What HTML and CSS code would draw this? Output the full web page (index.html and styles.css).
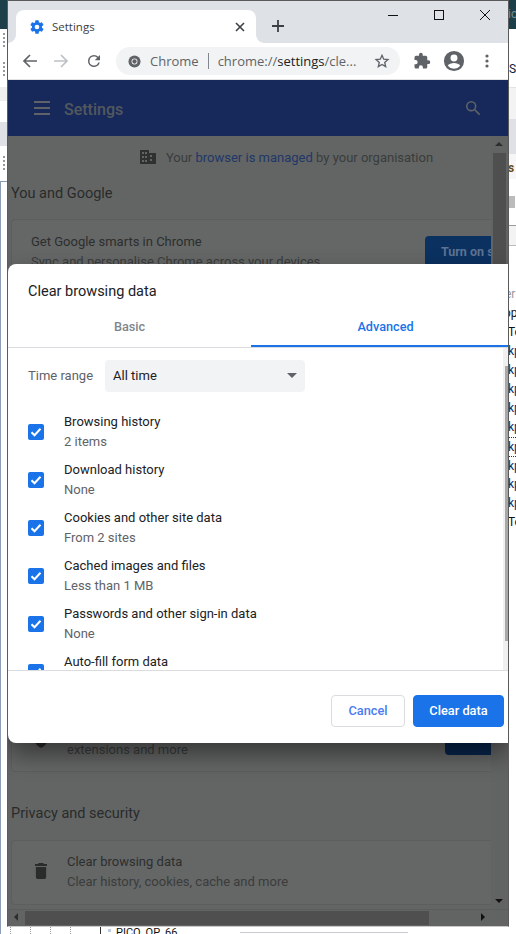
FILE: index.html
```html
<!DOCTYPE html>
<html lang="en">
<head>
	<meta charset="UTF-8">
	<title>Settings</title>
	<link rel="stylesheet" href="styles.css">
</head>
<body>
	<div class="desk">
		<div class="strip-left">
			<div class="sl-teal"></div>
			<div class="sl-white"><span class="grip"></span><span class="grip"></span></div>
			<div class="sl-grey"></div>
			<div class="sl-orange"><span class="orange-mark"></span></div>
			<div class="sl-mid"></div>
			<div class="sl-white2"><span class="grip"></span></div>
			<div class="sl-blue"></div>
		</div>
		<div class="strip-right">
			<div class="sr-teal">ic</div>
			<div class="sr-white">S</div>
			<div class="sr-band1"></div>
			<div class="sr-band2"></div>
			<div class="sr-band3">s</div>
			<div class="sr-band4"><span class="sr-blob"></span></div>
			<div class="sr-band5"></div>
			<div class="sr-gap"></div>
			<div class="sr-list">
				<span class="sr-faint">er</span>
				<span class="sr-cut">pp</span><span>Te</span><span class="sr-link">kp</span><span class="sr-link">kp</span><span class="sr-link">kp</span><span class="sr-link">kp</span><span class="sr-link">kp</span><span class="sr-link sr-dot">kp</span><span class="sr-link sr-dot">kp</span><span class="sr-link">kp</span><span class="sr-link">kp</span><span>Te</span>
			</div>
		</div>
		<div class="strip-bottom">
			<span class="tree"></span><span class="tree"></span><span class="tree"></span><span class="tree"></span>
			<span class="file-ico"></span><span class="file-name">PICO_OP_66</span>
			<span class="bottom-rule"></span>
		</div>

		<div class="window">
			<div class="tabstrip">
				<div class="tab">
					<svg class="tab-ico" width="16" height="16" viewBox="0 0 24 24"><path fill="#1a73e8" d="M19.4 13c.04-.32.1-.66.1-1s-.03-.68-.1-1l2.1-1.65c.2-.15.25-.42.13-.64l-2-3.46c-.12-.22-.39-.3-.61-.22l-2.49 1c-.52-.4-1.08-.73-1.69-.98l-.38-2.65A.49.49 0 0 0 14 2h-4c-.25 0-.46.18-.49.42l-.38 2.65c-.61.25-1.17.59-1.69.98l-2.49-1c-.23-.09-.49 0-.61.22l-2 3.46c-.13.22-.07.49.12.64L4.57 11c-.04.32-.07.66-.07 1s.03.68.07 1l-2.11 1.65c-.19.15-.24.42-.12.64l2 3.46c.12.22.39.3.61.22l2.49-1c.52.4 1.08.73 1.69.98l.38 2.65c.03.24.24.42.49.42h4c.25 0 .46-.18.49-.42l.38-2.65c.61-.25 1.17-.59 1.69-.98l2.49 1c.23.09.49 0 .61-.22l2-3.46c.12-.22.07-.49-.12-.64L19.4 13zM12 15.5a3.5 3.5 0 1 1 0-7 3.5 3.5 0 0 1 0 7z"/></svg>
					<span class="tab-title">Settings</span>
					<svg class="tab-close" width="10" height="10" viewBox="0 0 10 10"><path d="M1 1l8 8M9 1l-8 8" stroke="#3c4043" stroke-width="1.6" fill="none"/></svg>
				</div>
				<svg class="newtab" width="14" height="14" viewBox="0 0 14 14"><path d="M7 1v12M1 7h12" stroke="#3c4043" stroke-width="1.8" fill="none"/></svg>
				<div class="winbtns">
					<svg width="12" height="12" viewBox="0 0 12 12"><path d="M1 6.5h10" stroke="#111" fill="none"/></svg>
					<svg width="12" height="12" viewBox="0 0 12 12"><rect x="1.5" y="1.5" width="9" height="9" stroke="#111" fill="none"/></svg>
					<svg width="12" height="12" viewBox="0 0 12 12"><path d="M1 1l10 10M11 1L1 11" stroke="#111" fill="none"/></svg>
				</div>
			</div>
			<div class="toolbar">
				<svg class="nav" width="16" height="16" viewBox="0 0 16 16"><path d="M15 8H2M8 2L2 8l6 6" stroke="#5f6368" stroke-width="1.7" fill="none"/></svg>
				<svg class="nav" width="16" height="16" viewBox="0 0 16 16"><path d="M1 8h13M8 2l6 6-6 6" stroke="#bdc1c6" stroke-width="1.7" fill="none"/></svg>
				<svg class="nav" width="18" height="18" viewBox="0 0 24 24"><path fill="#5f6368" d="M17.65 6.35A7.96 7.96 0 0 0 12 4a8 8 0 1 0 7.73 10h-2.08A6 6 0 1 1 12 6c1.66 0 3.14.69 4.22 1.78L13 11h7V4l-2.35 2.35z"/></svg>
				<div class="omnibox">
					<svg class="chrome-ico" width="13" height="13" viewBox="0 0 14 14"><circle cx="7" cy="7" r="6.5" fill="#5f6368"/><circle cx="7" cy="7" r="3.2" fill="#f1f3f4"/><circle cx="7" cy="7" r="2.3" fill="#5f6368"/></svg>
					<span class="omni-host">Chrome</span>
					<span class="omni-sep"></span>
					<span class="omni-url"><span class="omni-dim">chrome://</span>settings<span class="omni-dim">/cle...</span></span>
					<svg class="omni-star" width="16" height="16" viewBox="0 0 24 24"><path fill="none" stroke="#5f6368" stroke-width="2" d="M12 3.5l2.6 5.8 6.3.6-4.8 4.2 1.4 6.2-5.500-3.200-5.500 3.200 1.400-6.200-4.800-4.200 6.300-.6z"/></svg>
				</div>
				<svg class="tool-ico" width="18" height="18" viewBox="0 0 24 24"><path fill="#5f6368" d="M20.500 11H19V7a2 2 0 0 0-2-2h-4V3.500a2.500 2.500 0 0 0-5 0V5H4a2 2 0 0 0-2 2v3.800h1.500a2.700 2.700 0 0 1 0 5.400H2V20a2 2 0 0 0 2 2h3.800v-1.500a2.700 2.700 0 0 1 5.400 0V22H17a2 2 0 0 0 2-2v-4h1.500a2.500 2.500 0 0 0 0-5z"/></svg>
				<svg class="tool-ico" width="22" height="22" viewBox="0 0 24 24"><path fill="#5f6368" d="M12 1a11 11 0 1 0 0 22 11 11 0 0 0 0-22zm0 4a3.800 3.800 0 1 1 0 7.600A3.800 3.800 0 0 1 12 5zm0 15.500a8.700 8.700 0 0 1-6.800-3.300c.8-1.900 4.300-2.900 6.800-2.900s6 1 6.800 2.900a8.700 8.700 0 0 1-6.800 3.300z"/></svg>
				<svg class="tool-ico" width="4" height="14" viewBox="0 0 4 14"><circle cx="2" cy="2" r="1.600" fill="#5f6368"/><circle cx="2" cy="7" r="1.600" fill="#5f6368"/><circle cx="2" cy="12" r="1.600" fill="#5f6368"/></svg>
			</div>

			<div class="settings-bar">
				<span class="burger"><i></i><i></i><i></i></span>
				<span class="bar-title">Settings</span>
				<svg class="bar-search" width="16" height="16" viewBox="0 0 18 18"><circle cx="7" cy="7" r="5" stroke="#5f6368" stroke-width="1.800" fill="none"/><path d="M11 11l5.500 5.500" stroke="#5f6368" stroke-width="1.800"/></svg>
			</div>

			<div class="viewport">
				<div class="page-row">
					<div class="page">
						<div class="managed">
							<svg width="18" height="16" viewBox="0 0 18 16"><path fill="#2f3131" d="M1 1h9v3h7v11H1zm2 2v2h2V3zm3 0v2h2V3zM3 7v2h2V7zm3 0v2h2V7zm-3 4v2h2v-2zm3 0v2h2v-2zm5-5v2h2V6zm0 4v2h2v-2z"/></svg>
							<span>Your <a class="managed-link">browser is managed</a> by your organisation</span>
						</div>
						<h2 class="section-title first">You and Google</h2>
						<div class="card card-google">
							<div class="card-top">
								<div>
									<div class="row-title">Get Google smarts in Chrome</div>
									<div class="row-sub">Sync and personalise Chrome across your devices</div>
								</div>
								<div class="turn-on">Turn on sync</div>
							</div>
							<div class="card-bottom">
								<svg class="shield" width="14" height="18" viewBox="0 0 16 20"><path fill="#2a2b2b" d="M8 0l8 3v6c0 5-3.500 9-8 11-4.500-2-8-6-8-11V3z"/></svg>
								<div class="row-sub ext">extensions and more</div>
								<div class="turn-on small">Check</div>
							</div>
						</div>
						<h2 class="section-title">Privacy and security</h2>
						<div class="card card-privacy">
							<svg class="trash" width="12" height="16" viewBox="0 0 14 16" preserveAspectRatio="none"><path fill="#2a2b2b" d="M4.500 0h5l1 1H14v2H0V1h3.500zM1 4h12v10a2 2 0 0 1-2 2H3a2 2 0 0 1-2-2z"/></svg>
							<div>
								<div class="row-title">Clear browsing data</div>
								<div class="row-sub">Clear history, cookies, cache and more</div>
							</div>
						</div>
					</div>
					<div class="vscroll">
						<span class="arrow-up"></span>
						<span class="vthumb"></span>
						<span class="arrow-down"></span>
					</div>
				</div>
				<div class="hscroll">
					<span class="arrow-left"></span>
					<span class="hthumb"></span>
					<span class="arrow-right"></span>
				</div>
			</div>

			<div class="dialog">
				<div class="dlg-title">Clear browsing data</div>
				<div class="dlg-tabs">
					<div class="dlg-tab">Basic</div>
					<div class="dlg-tab active">Advanced</div>
				</div>
				<div class="dlg-body">
					<div class="dlg-scroll">
						<div class="time-range">
							<span class="time-label">Time range</span>
							<div class="select">All time<span class="select-arrow"></span></div>
						</div>
						<div class="check-row"><span class="check"><svg width="16" height="16" viewBox="0 0 16 16"><path d="M3.500 8.200l3 3 6-6.400" stroke="#fff" stroke-width="2" fill="none"/></svg></span><div><div class="check-title">Browsing history</div><div class="check-sub">2 items</div></div></div>
						<div class="check-row"><span class="check"><svg width="16" height="16" viewBox="0 0 16 16"><path d="M3.500 8.200l3 3 6-6.400" stroke="#fff" stroke-width="2" fill="none"/></svg></span><div><div class="check-title">Download history</div><div class="check-sub">None</div></div></div>
						<div class="check-row"><span class="check"><svg width="16" height="16" viewBox="0 0 16 16"><path d="M3.500 8.200l3 3 6-6.400" stroke="#fff" stroke-width="2" fill="none"/></svg></span><div><div class="check-title">Cookies and other site data</div><div class="check-sub">From 2 sites</div></div></div>
						<div class="check-row"><span class="check"><svg width="16" height="16" viewBox="0 0 16 16"><path d="M3.500 8.200l3 3 6-6.400" stroke="#fff" stroke-width="2" fill="none"/></svg></span><div><div class="check-title">Cached images and files</div><div class="check-sub">Less than 1 MB</div></div></div>
						<div class="check-row"><span class="check"><svg width="16" height="16" viewBox="0 0 16 16"><path d="M3.500 8.200l3 3 6-6.400" stroke="#fff" stroke-width="2" fill="none"/></svg></span><div><div class="check-title">Passwords and other sign-in data</div><div class="check-sub">None</div></div></div>
						<div class="check-row"><span class="check"><svg width="16" height="16" viewBox="0 0 16 16"><path d="M3.500 8.200l3 3 6-6.400" stroke="#fff" stroke-width="2" fill="none"/></svg></span><div><div class="check-title">Auto-fill form data</div><div class="check-sub">None</div></div></div>
					</div>
					<div class="dlg-scrollbar"><span class="dlg-thumb"></span></div>
				</div>
				<div class="dlg-foot">
					<div class="btn btn-cancel">Cancel</div>
					<div class="btn btn-clear">Clear data</div>
				</div>
			</div>
		</div>
	</div>
</body>
</html>
```

FILE: styles.css
```css
html, body {
	margin: 0;
	padding: 0;
}
body {
	width: 516px;
	height: 934px;
	overflow: hidden;
	background: #fff;
	font-family: Roboto, "Liberation Sans", sans-serif;
}
.desk {
	position: relative;
	width: 516px;
	height: 934px;
	overflow: hidden;
}

/* bits of other windows behind chrome */
.strip-left {
	position: absolute;
	left: 0;
	top: 0;
	width: 8px;
	height: 934px;
	display: flex;
	flex-direction: column;
	background: #fff;
}
.sl-teal { height: 29px; background: #1d3f4a; }
.sl-white { height: 58px; display: flex; flex-direction: column; gap: 14px; padding: 4px 0 0 3px; box-sizing: border-box; }
.sl-grey { height: 14px; background: #efefef; }
.sl-orange { height: 21px; display: flex; justify-content: flex-end; }
.orange-mark { width: 1px; height: 8px; background: #f0a830; }
.sl-mid { height: 24px; background: #dfe1e6; }
.sl-white2 { height: 35px; padding: 10px 0 0 3px; box-sizing: border-box; }
.sl-blue { flex: 1; border-top: 1px solid #8c9db5; border-left: 1px solid #8c9db5; }
.grip {
	display: block;
	width: 2px;
	height: 15px;
	background: repeating-linear-gradient(#999 0 2px, transparent 2px 4px);
}
.strip-right {
	position: absolute;
	left: 508px;
	top: 0;
	width: 8px;
	height: 934px;
	overflow: hidden;
	font-size: 12px;
	color: #111;
	background: #fff;
}
.sr-teal { height: 29px; background: #1d3f4a; color: #6f8f99; line-height: 29px; }
.sr-white { height: 58px; line-height: 80px; padding-left: 1px; box-sizing: border-box; color: #0b1a3a; }
.sr-band1 { height: 32px; background: #f3f3f3; border-top: 1px solid #e4e4e4; box-sizing: border-box; }
.sr-band2 { height: 35px; background: #dfe1e6; }
.sr-band3 { height: 25px; background: #f6f6f6; line-height: 28px; color: #6b4a10; font-weight: 700; }
.sr-band4 { height: 46px; display: flex; align-items: center; }
.sr-blob { width: 7px; height: 12px; background: #bbb; }
.sr-band5 { height: 21px; background: #f3f3f3; border-top: 1px solid #9a9a9a; border-bottom: 1px solid #bbb; box-sizing: border-box; }
.sr-gap { height: 39px; }
.sr-list { display: flex; flex-direction: column; line-height: 19px; white-space: nowrap; }
.sr-list span { height: 19px; }
.sr-faint { color: #999; margin-left: -3px; }
.sr-cut { margin-left: -4px; }
.sr-link { color: #0a2a6b; }
.sr-dot { box-sizing: border-box; border-top: 1px dotted #333; line-height: 18px; }
.strip-bottom {
	position: absolute;
	left: 0;
	top: 927px;
	width: 516px;
	height: 7px;
	overflow: hidden;
	display: flex;
	align-items: flex-start;
	font-size: 11px;
	color: #111;
}
.tree { width: 0; height: 7px; margin-left: 10px; margin-right: 9px; border-left: 1px dotted #999; }
.file-ico {
	width: 6px;
	height: 7px;
	margin-left: 20px;
	border-left: 1px solid #333;
	box-shadow: 6px 0 0 -2px #bcd;
}
.file-name { margin-left: 9px; line-height: 12px; }
.bottom-rule {
	position: absolute;
	left: 240px;
	top: 5px;
	width: 168px;
	height: 1px;
	background: #c8ccd2;
}

/* chrome window */
.window {
	position: absolute;
	left: 7px;
	top: 0;
	width: 502px;
	height: 927px;
	box-sizing: border-box;
	border: 1px solid #5a5a5a;
	border-bottom-color: #c9c9c9;
	display: flex;
	flex-direction: column;
	background: #fff;
	overflow: hidden;
}
.tabstrip {
	height: 42px;
	flex: none;
	background: #dee1e6;
	display: flex;
	align-items: flex-end;
	position: relative;
}
.tab {
	position: relative;
	width: 240px;
	height: 33px;
	margin-left: 8px;
	background: #fff;
	border-radius: 8px 8px 0 0;
	display: flex;
	align-items: center;
	padding: 0 11px 0 13px;
	box-sizing: border-box;
}
.tab::before, .tab::after {
	content: "";
	position: absolute;
	bottom: 0;
	width: 8px;
	height: 8px;
}
.tab::before { left: -8px; background: radial-gradient(circle at 0 0, #dee1e6 7.500px, #fff 8px); }
.tab::after { right: -8px; background: radial-gradient(circle at 100% 0, #dee1e6 7.500px, #fff 8px); }
.tab-ico { flex: none; }
.tab-title {
	flex: 1;
	margin-left: 7px;
	font: 11.500px "Open Sans", sans-serif;
	color: #3c4043;
}
.newtab { margin: 0 0 10px 15px; }
.winbtns {
	position: absolute;
	right: 0;
	top: 8px;
	display: flex;
	gap: 34px;
	padding-right: 17px;
}
.toolbar {
	height: 37px;
	flex: none;
	display: flex;
	align-items: center;
	background: #fff;
	border-bottom: 1px solid #e3e3e3;
	box-sizing: border-box;
}
.nav { margin-left: 14px; flex: none; }
.nav + .nav { margin-left: 15px; }
.nav + .nav + .nav { margin-left: 16px; }
.omnibox {
	width: 284px;
	height: 28px;
	margin-left: 13px;
	background: #f1f3f4;
	border-radius: 14px;
	display: flex;
	align-items: center;
	padding: 0 10px 0 12px;
	box-sizing: border-box;
	font: 13px "Open Sans", sans-serif;
	color: #5f6368;
	flex: none;
}
.chrome-ico { flex: none; }
.omni-host { margin-left: 9px; }
.omni-sep { width: 1px; height: 16px; background: #80868b; margin: 0 9px; }
.omni-url { flex: 1; white-space: nowrap; color: #202124; }
.omni-dim { color: #5f6368; }
.omni-star { flex: none; }
.tool-ico { flex: none; margin-left: 13px; }
.tool-ico + .tool-ico { margin-left: 12px; }
.tool-ico + .tool-ico + .tool-ico { margin-left: 20px; }

.settings-bar {
	height: 56px;
	flex: none;
	background: #16295a;
	display: flex;
	align-items: center;
	padding: 0 27px 0 26px;
	box-sizing: border-box;
}
.burger { display: flex; flex-direction: column; gap: 4px; }
.burger i { display: block; width: 16px; height: 2px; background: #5f6368; }
.bar-title { flex: 1; margin-left: 14px; padding-top: 2px; font-size: 16px; font-weight: 500; color: #53585f; }

.viewport {
	flex: 1;
	min-height: 0;
	display: flex;
	flex-direction: column;
	background: #636564;
}
.page-row { flex: 1; min-height: 0; display: flex; }
.page {
	flex: 1;
	min-width: 0;
	overflow: hidden;
	padding-left: 3px;
	font-size: 13px;
	color: #2f3131;
}
.managed {
	height: 42px;
	display: flex;
	align-items: center;
	justify-content: center;
	gap: 9px;
	padding-left: 70px;
	color: #3a3c3c;
}
.managed-link { color: #1f3768; }
.section-title {
	margin: 0;
	font-size: 14.500px;
	font-weight: 400;
	color: #292b2b;
	line-height: 20px;
}
.section-title.first { margin-top: 6px; }
.card {
	box-sizing: border-box;
	border: 1px solid #5d5f5e;
	border-right: 0;
	border-radius: 4px 0 0 4px;
	background: #656766;
	overflow: hidden;
}
.card-google {
	margin-top: 15px;
	height: 553px;
	display: flex;
	flex-direction: column;
	justify-content: space-between;
	margin-bottom: 32px;
}
.card-top {
	display: flex;
	justify-content: space-between;
	padding: 12px 0 0 19px;
}
.row-title { font-size: 13px; line-height: 20px; color: #2c2e2e; }
.row-sub { font-size: 13px; line-height: 20px; color: #3a3c3c; margin-top: 0; }
.turn-on {
	width: 66px;
	height: 32px;
	margin-top: 4px;
	flex: none;
	overflow: hidden;
	white-space: nowrap;
	background: #0b3161;
	color: #5d7391;
	border-radius: 4px 0 0 4px;
	font-size: 12.500px;
	font-weight: 700;
	line-height: 32px;
	padding-left: 16px;
	box-sizing: border-box;
}
.card-bottom {
	display: flex;
	align-items: flex-end;
	padding: 0 0 11px 22px;
}
.shield { flex: none; margin: 0 19px 12px 0; }
.ext { flex: 1; }
.turn-on.small { width: 46px; margin: 0 0 5px; padding-left: 18px; background: #07254d; color: #3a4a60; }
.card-privacy {
	margin-top: 16px;
	height: 65px;
	display: flex;
	align-items: flex-start;
	padding: 11px 0 0 23px;
	gap: 20px;
}
.trash { margin-top: 11px; flex: none; }
.vscroll {
	width: 17px;
	flex: none;
	background: #626463;
	position: relative;
}
.vthumb { position: absolute; left: 2px; right: 2px; top: 17px; height: 120px; background: #4f4f4f; }
.arrow-up, .arrow-down, .arrow-left, .arrow-right { position: absolute; width: 0; height: 0; border: 4px solid transparent; }
.arrow-up { top: 2px; left: 4px; border-bottom-color: #2d2d2d; }
.arrow-down { bottom: 2px; left: 4px; border-top-color: #111; }
.hscroll {
	height: 17px;
	flex: none;
	position: relative;
	background: #626463;
	border-top: 1px solid #5b5d5c;
	box-sizing: border-box;
}
.hthumb { position: absolute; left: 17px; width: 404px; top: 1px; bottom: 1px; background: #4f4f4f; }
.arrow-left { left: 2px; top: 3px; border-right-color: #2d2d2d; }
.arrow-right { left: 473px; top: 3px; border-left-color: #111; }

/* dialog */
.dialog {
	position: absolute;
	left: 0;
	top: 263px;
	width: 500px;
	height: 479px;
	background: #fff;
	border-radius: 8px 0 0 8px;
	box-shadow: 0 12px 24px rgba(0, 0, 0, .45);
	display: flex;
	flex-direction: column;
}
.dlg-title {
	padding: 19px 20px 0;
	height: 46px;
	box-sizing: border-box;
	font-size: 14.500px;
	line-height: 18px;
	color: #202124;
	flex: none;
}
.dlg-tabs {
	display: flex;
	height: 38px;
	flex: none;
	border-bottom: 1px solid #dadce0;
	box-sizing: border-box;
}
.dlg-tab {
	width: 243px;
	flex: none;
	text-align: center;
	font-size: 12.700px;
	font-weight: 500;
	line-height: 33px;
	color: #80868b;
}
.dlg-tab.active {
	width: 257px;
	padding-left: 12px;
	color: #1a73e8;
	border-bottom: 2px solid #1a73e8;
	height: 37px;
	box-sizing: border-box;
}
.dlg-body {
	flex: 1;
	min-height: 0;
	display: flex;
}
.dlg-scroll {
	flex: 1;
	overflow: hidden;
	padding: 12px 20px 0;
}
.time-range { display: flex; align-items: center; gap: 12px; margin-bottom: 16px; }
.time-label { font-size: 13px; color: #5f6368; margin-bottom: 2px; }
.select {
	width: 200px;
	height: 32px;
	box-sizing: border-box;
	padding: 0 8px 2px;
	background: #f1f3f4;
	border-radius: 4px;
	display: flex;
	align-items: center;
	justify-content: space-between;
	font-size: 13px;
	color: #202124;
}
.select-arrow {
	width: 0;
	height: 0;
	border: 5px solid transparent;
	border-top: 5px solid #5f6368;
	border-bottom: 0;
}
.check-row {
	display: flex;
	align-items: center;
	gap: 20px;
	height: 48px;
	box-sizing: border-box;
}
.check {
	width: 16px;
	height: 16px;
	background: #1a73e8;
	border-radius: 2px;
	flex: none;
}
.check svg { display: block; }
.check-title { font-size: 13px; line-height: 20px; color: #202124; }
.check-sub { font-size: 13px; line-height: 20px; color: #5f6368; }
.dlg-scrollbar {
	width: 5px;
	flex: none;
	background: #f0f0f0;
	position: relative;
}
.dlg-thumb { position: absolute; right: 0; top: 18px; height: 275px; width: 3px; background: #a8a8a8; }
.dlg-foot {
	height: 73px;
	flex: none;
	border-top: 1px solid #dadce0;
	box-sizing: border-box;
	display: flex;
	justify-content: flex-end;
	align-items: flex-start;
	gap: 8px;
	padding: 24px 4px 0 0;
}
.btn {
	height: 32px;
	box-sizing: border-box;
	border-radius: 4px;
	font-size: 12.800px;
	font-weight: 500;
	line-height: 30px;
	text-align: center;
}
.btn-cancel { width: 74px; border: 1px solid #dadce0; color: #4a7cf0; background: #fff; }
.btn-clear { width: 91px; border: 1px solid #1a73e8; background: #1a73e8; color: #fff; }
```
